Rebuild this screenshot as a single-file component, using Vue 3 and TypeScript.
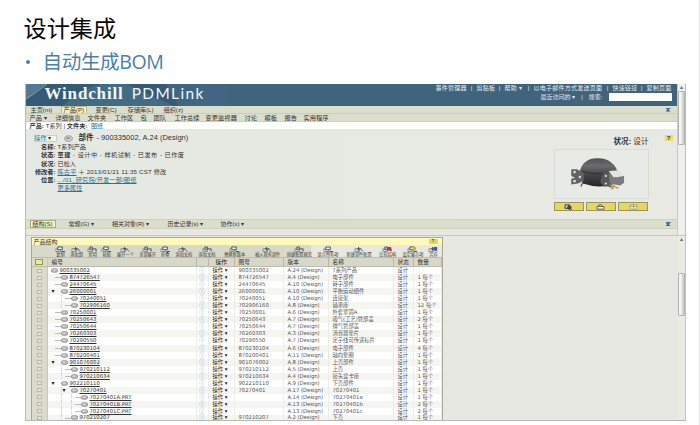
<script setup lang="ts">
interface Item { text: string; w: number; active?: boolean }
interface Row {
  no: string
  depth: number
  open?: boolean
  drawing: string
  version: string
  name: string
  state: string
  qty: string
}

const menu: Item[] = [
  { text: '主页(m)', w: 31 },
  { text: '产品(P)', w: 34, active: true },
  { text: '变更(C)', w: 32 },
  { text: '存储库(L)', w: 36 },
  { text: '组织(z)', w: 30 },
]
const subMenu: Item[] = [
  { text: '产品 ▾', w: 26 },
  { text: '详细信息', w: 32 },
  { text: '文件夹', w: 27 },
  { text: '工作区', w: 26 },
  { text: '包', w: 13 },
  { text: '团队', w: 21 },
  { text: '工作总续', w: 31 },
  { text: '变更监视器', w: 39 },
  { text: '讨论', w: 20 },
  { text: '模板', w: 20 },
  { text: '报告', w: 19 },
  { text: '实用程序', w: 40 },
]
const topLinks: Item[] = [
  { text: '事件管理器', w: 41 },
  { text: '剪贴板', w: 28 },
  { text: '帮助 ▾', w: 29 },
  { text: '以电子邮件方式发送页面', w: 79 },
  { text: '快速链接', w: 34 },
  { text: '复制页面', w: 25 },
]
const tabs: Item[] = [
  { text: '结构(S)', w: 38, active: true },
  { text: '常规(G) ▾', w: 43.5 },
  { text: '相关对象(R) ▾', w: 55.5 },
  { text: '历史记录(s) ▾', w: 53 },
  { text: '协作(x) ▾', w: 40 },
]
const tools: Item[] = [
  { text: '复制', w: 14 },
  { text: '添加到', w: 18 },
  { text: '剪切', w: 14 },
  { text: '粘贴', w: 14 },
  { text: '展开一个', w: 23 },
  { text: '全部展开', w: 21 },
  { text: '折叠', w: 14 },
  { text: '添加文档', w: 23 },
  { text: '添加文档', w: 23 },
  { text: '替换新版本', w: 32 },
  { text: '插入现有部件', w: 34 },
  { text: '创建配置规范', w: 29 },
  { text: '显示所有项', w: 28 },
  { text: '新建部件配置', w: 34 },
  { text: '比较结构', w: 23 },
  { text: '设定展示项', w: 27 },
  { text: '另存', w: 14 },
]
const d = (v: string): string => `A.${v} (Design)`
const rows: Row[] = [
  { no: '900335002', depth: 0, drawing: '900335002', version: d('24'), name: 'T系列产品', state: '设计', qty: '' },
  { no: '874726547', depth: 1, drawing: '874726547', version: d('4'), name: '电子部件', state: '设计', qty: '1 每个' },
  { no: '24470645', depth: 1, drawing: '24470645', version: d('10'), name: '转子部件', state: '设计', qty: '1 每个' },
  { no: '26000001', depth: 1, open: true, drawing: '26000001', version: d('10'), name: '平衡运动组件', state: '设计', qty: '1 每个' },
  { no: '70240051', depth: 2, drawing: '70240051', version: d('10'), name: '连接架', state: '设计', qty: '1 每个' },
  { no: '702906160', depth: 2, drawing: '702906160', version: d('8'), name: '轴承座', state: '设计', qty: '12 每个' },
  { no: '70250001', depth: 1, drawing: '70250001', version: d('6'), name: '外套紧固A', state: '设计', qty: '1 每个' },
  { no: '70250643', depth: 1, drawing: '70250643', version: d('7'), name: '吸气(工艺)管部盖', state: '设计', qty: '2 每个' },
  { no: '70250644', depth: 1, drawing: '70250644', version: d('7'), name: '排气管部盖', state: '设计', qty: '1 每个' },
  { no: '70260303', depth: 1, drawing: '70260303', version: d('3'), name: '消音器垫片', state: '设计', qty: '1 每个' },
  { no: '70290550', depth: 1, drawing: '70290550', version: d('7'), name: '定子线可传递标片', state: '设计', qty: '1 每个' },
  { no: '870230104', depth: 1, drawing: '870230104', version: d('6'), name: '电子部件', state: '设计', qty: '4 每个' },
  { no: '870200401', depth: 1, drawing: '870200401', version: d('11'), name: '轴向垫圈', state: '设计', qty: '1 每个' },
  { no: '901076002', depth: 1, open: true, drawing: '901076002', version: d('8'), name: '上壳部件', state: '设计', qty: '1 每个' },
  { no: '970210112', depth: 2, drawing: '970210112', version: d('5'), name: '上壳', state: '设计', qty: '1 每个' },
  { no: '970210634', depth: 2, drawing: '970210634', version: d('4'), name: '接头盒卡座', state: '设计', qty: '1 每个' },
  { no: '902210110', depth: 1, open: true, drawing: '902210110', version: d('9'), name: '下壳部件', state: '设计', qty: '1 每个' },
  { no: '70270401', depth: 2, open: true, drawing: '70270401', version: d('17'), name: '70270401', state: '设计', qty: '1 每个' },
  { no: '70270401A.PRT', depth: 3, drawing: '', version: d('14'), name: '70270401a', state: '设计', qty: '1 每个' },
  { no: '70270401B.PRT', depth: 3, drawing: '', version: d('13'), name: '70270401b', state: '设计', qty: '2 每个' },
  { no: '70270401C.PRT', depth: 3, drawing: '', version: d('13'), name: '70270401c', state: '设计', qty: '2 每个' },
  { no: '970210207', depth: 2, drawing: '970210207', version: d('2'), name: '下壳', state: '设计', qty: '1 每个' },
]
</script>

<template>
  <main class="slide">
    <h1>设计集成</h1>
    <h2><i class="dot"></i>自动生成BOM</h2>

    <section class="window">
      <div class="upper">
        <div class="page">
          <header class="banner">
            <svg class="art" viewBox="0 0 200 22" preserveAspectRatio="none">
              <path d="M0 0H200V22H0Z" fill="#426681" />
              <path d="M20 0H140L152 22H0V14Z" fill="#345a76" />
              <path d="M36 22Q70 -8 100 0L148 22Z" fill="#4d7690" opacity=".6" />
              <path d="M0 0H20L0 15Z" fill="#547b91" />
              <path d="M0 15Q10 9 21 0" stroke="#9fb2a8" stroke-width=".8" fill="none" />
            </svg>
            <div class="brand"><b>Windchill</b><span>PDMLink</span></div>
            <div class="global">
              <nav>
                <span v-for="(l, i) in topLinks" :key="l.text" class="link" :style="{ width: l.w + 'px' }">
                  {{ l.text }}<em v-if="i < topLinks.length - 1">|</em>
                </span>
              </nav>
              <div class="search"><span>最近访问的 ▾</span><span>|</span><span>搜索:</span><input type="text" /></div>
            </div>
          </header>
          <nav class="menu">
            <span v-for="m in menu" :key="m.text" :style="{ width: m.w + 'px' }"><b :class="{ active: m.active }">{{ m.text }}</b></span>
            <i class="collapse"></i>
          </nav>
          <nav class="submenu">
            <span v-for="m in subMenu" :key="m.text" :style="{ width: m.w + 'px' }">{{ m.text }}</span>
          </nav>
          <div class="crumb"><b>产品:</b> T系列 | <b>文件夹:</b>&nbsp; <a>图纸</a></div>

          <div class="details">
            <div class="facts">
              <div class="headline">
                <span class="action"><a>操作</a> ▾</span>
                <svg class="part" viewBox="0 0 12 9"><path d="M1 3L4 1H9L11 3V6L8 8H3L1 6Z" fill="#d2d3cf" stroke="#777" stroke-width=".8" /><path d="M3 3H8V5H3Z" fill="#85878a" /></svg>
                <b>部件</b><span>- 900335002, A.24 (Design)</span>
              </div>
              <dl>
                <dt>名称:</dt><dd>T系列产品</dd>
                <dt>状态:</dt><dd class="states"><b>草建</b> - 设计中 - 样机试制 - 已发布 - 已作废</dd>
                <dt>状况:</dt><dd>已检入</dd>
                <dt>修改者:</dt><dd class="author"><a>陈古平</a> ＋ 2013/01/21 11:35 CST 修改</dd>
                <dt>位置:</dt><dd class="path"><a>.../01_研究院/开发一部/图纸</a></dd>
                <dt></dt><dd><a>更多属性</a></dd>
              </dl>
            </div>
            <div class="preview">
              <p><b>状况:</b> 设计</p>
              <div class="thumb">
                <svg viewBox="0 0 95 50">
                  <defs>
                    <linearGradient id="shell" x1="0" y1="0" x2="0" y2="1">
                      <stop offset="0" stop-color="#505052" />
                      <stop offset=".28" stop-color="#6c6c6f" />
                      <stop offset=".55" stop-color="#48484b" />
                      <stop offset="1" stop-color="#252529" />
                    </linearGradient>
                  </defs>
                  <path d="M28 34L26 38M53 34L57 39" stroke="#555" stroke-width="1.4" />
                  <path d="M25 22C27 13 34 8 44 8.500C55 8.500 62 15 64 22L62 35Q46 41 28 35Z" fill="url(#shell)" />
                  <path d="M27 22Q44 27 60 23" stroke="#29292d" stroke-width=".8" fill="none" />
                  <path d="M16 20L22 20L29 24V32L23 35L16 36V30L20 29L16 27Z" fill="#626264" />
                  <path d="M49 24L57 23L58 38L50 38L46 33Z" fill="#58585b" />
                  <g fill="#d9d9d8"><circle cx="19.500" cy="23" r="1.400" /><circle cx="19.500" cy="32.500" r="1.400" /><circle cx="25" cy="28" r="1.300" /><circle cx="52" cy="27" r="1.200" /><circle cx="52" cy="35" r="1.200" /></g>
                  <path d="M55 22L66 21L71 27L60 29Z" fill="#e3e3df" />
                  <path d="M55 24L60 29L71 27V34L67 37L56 35Z" fill="#7b7b7d" />
                  <path d="M56 36L60 40M61 36L58 41M61 38L65 40" stroke="#b28d38" stroke-width="1.3" />
                </svg>
              </div>
              <div class="buttons">
                <button><svg viewBox="0 0 10 7"><path d="M1 1H6V5H1Z" fill="#ddd" stroke="#222" /><circle cx="6" cy="4" r="2" fill="#555" stroke="#222" /><path d="M7 5L9 7" stroke="#222" /></svg></button>
                <button><svg viewBox="0 0 10 7"><path d="M3 3V1H6L7 3" fill="#fff" stroke="#444" /><path d="M1 3H9V6H1Z" fill="#fff" stroke="#444" /></svg></button>
                <button><svg viewBox="0 0 10 7"><path d="M1 1H9V6H1ZM1 3H9M5 1V6" fill="#fffbd5" stroke="#8e874e" stroke-width=".8" /></svg></button>
              </div>
            </div>
            <i class="help">?</i>
          </div>

          <nav class="tabs">
            <span v-for="t in tabs" :key="t.text" :style="{ width: t.w + 'px' }"><b :class="{ active: t.active }">{{ t.text }}</b></span>
            <i class="collapse"></i>
          </nav>
        </div>
        <div class="scroll first"><i class="arrow">▴</i><i class="handle"></i></div>
      </div>

      <div class="lower">
        <div class="table">
          <div class="caption"><b>产品结构</b><i>?</i></div>
          <div class="toolbar">
            <span v-for="(t, i) in tools" :key="i" :style="{ width: t.w + 'px' }">
              <svg viewBox="0 0 12 7">
                <path d="M1 3H6V6H1Z" fill="#ddd" stroke="#777" stroke-width=".8" />
                <path v-if="i % 3 === 0" d="M3 1H8V4H3ZM7 6H11" fill="#f2f3e4" stroke="#344f60" />
                <path v-else-if="i % 3 === 1" d="M5 1V5M3 3H8M7 3L10 6" fill="none" stroke="#3f545c" />
                <path v-else d="M3 1H6V4H3ZM6 3H10V6" fill="#a8b4b4" stroke="#50646b" />
                <path v-if="i > 13" d="M6 1H10V5H6Z" :fill="i === 14 ? '#b83340' : i === 15 ? '#d7b51e' : '#315e9f'" />
              </svg>{{ t.text }}
            </span>
          </div>
          <div class="row head">
            <span class="check"><i></i></span><span class="number">编号</span><span class="info"></span><span class="op">操作</span>
            <span class="drawing">图号</span><span class="version">版本</span><span class="name">名称</span><span class="state">状态</span><span class="qty">数量</span>
          </div>
          <div v-for="r in rows" :key="r.no" class="row">
            <span class="check"><i></i></span>
            <span class="number">
              <i v-for="n in r.depth" :key="n" class="guide" :class="{ leaf: n === r.depth && !r.open }"><template v-if="n === r.depth && r.open">▾</template></i>
              <svg viewBox="0 0 8 5"><path d="M.5 1.5L2 .5H6L7.5 1.5V3.5L6 4.5H2L.5 3.5Z" fill="#bbb" stroke="#737373" stroke-width=".7" /><path d="M2 2H5" stroke="#f5f5f5" /></svg>
              <a>{{ r.no }}</a>
            </span>
            <span class="info">ⓘ</span><span class="op">操作 ▾</span><span class="drawing">{{ r.drawing }}</span><span class="version">{{ r.version }}</span>
            <span class="name">{{ r.name }}</span><span class="state">{{ r.state }}</span><span class="qty">{{ r.qty }}</span>
          </div>
        </div>
        <div class="scroll second"><i class="arrow">▴</i><i class="handle"></i></div>
      </div>
    </section>
  </main>
</template>

<style>
body { margin: 0; overflow: hidden; background: #fff; }
</style>
<style scoped>
* { box-sizing: border-box; }
.slide { width: 700px; height: 425px; padding: 13px 0 0 24.5px; border-right: 1px solid #e9e9e9; overflow: hidden; background: #fff; color: #333; font-family: "Liberation Sans", "Noto Sans CJK SC", sans-serif; white-space: nowrap; }
h1, h2, p, dl, dd { margin: 0; font-weight: 400; }
i, em { font-style: normal; }
h1 { height: 33px; margin-left: -1px; font: 23.2px/29px "Noto Sans CJK SC", sans-serif; color: #080808; }
h2 { display: flex; align-items: center; height: 38px; padding-bottom: 6px; font: 19.6px/32px "Open Sans", "Noto Sans CJK SC", sans-serif; letter-spacing: -.4px; color: #4c7fae; }
.dot { width: 4px; height: 4px; margin: 0 13px 0 1px; border-radius: 50%; background: #4c7fae; }
.window { display: flex; flex-direction: column; width: 661px; height: 337px; border-left: 1px solid #b9bdb8; border-bottom: 1px solid #b7b9b3; overflow: hidden; background: #e7e8e1; }
.upper { display: flex; height: 152px; border-right: 1px solid #bbb; border-bottom: 1px solid #c5c6c0; }
.page { width: 651px; }
.banner { position: relative; display: flex; justify-content: space-between; height: 22px; background: #41647d; color: #e1edf1; }
.art { position: absolute; left: 0; top: 0; width: 200px; height: 22px; }
.brand { position: relative; display: flex; align-items: center; gap: 8px; padding: 0 0 3px 19px; color: #f3f6f7; }
.brand b { font: 700 17px/19px "Liberation Serif", serif; letter-spacing: .85px; }
.brand span { font: 400 15.4px/19px Lato, sans-serif; letter-spacing: 1.4px; }
.global { width: 241px; padding-top: 1px; font-size: 6px; }
.global nav { display: flex; height: 7px; line-height: 7px; }
.link { display: flex; letter-spacing: .25px; }
.link em { margin-left: auto; margin-right: 4px; }
.search { display: flex; align-items: center; justify-content: flex-end; gap: 6px; height: 10px; padding-right: 5px; line-height: 8px; }
.search input { width: 63px; height: 8px; padding: 0; border: 0; background: #fff; }
.menu, .submenu, .tabs { display: flex; align-items: center; font-size: 6.2px; }
.menu { height: 7px; padding-left: 5px; background: #dcdecd; line-height: 7px; }
.menu b, .tabs b { font-weight: 400; }
.menu .active { display: inline-block; height: 7px; margin-left: -1px; padding: 0 2px; border: 1px solid #bcb887; border-bottom: 0; background: #f6f1c1; line-height: 6px; vertical-align: top; }
.collapse { width: 5px; height: 4px; margin-left: auto; margin-right: 6px; border-top: 1px solid #4d7285; background: #345e7a; clip-path: polygon(0 0, 100% 0, 100% 25%, 60% 50%, 100% 100%, 0 100%, 40% 50%, 0 25%); }
.submenu { height: 9px; padding-left: 4px; border-top: 1px solid #cccdb8; border-bottom: 1px solid #cdcebf; background: #dcdecd; line-height: 7px; letter-spacing: .1px; }
.crumb { height: 7px; padding-left: 4px; background: #fffffb; font-size: 6.2px; line-height: 7px; }
a { color: #277295; text-decoration: underline; }
.details { position: relative; display: flex; justify-content: space-between; height: 90px; padding: 4px 28px 0 8px; background: linear-gradient(90deg, #e5e9e3, #e8e9e2); }
.headline { display: flex; align-items: center; height: 10px; font-size: 7.5px; line-height: 10px; }
.headline b { margin-right: 3px; }
.action { width: 23px; height: 7px; border: 1px solid #c8d1cb; background: #f1f4e8; font-size: 6px; line-height: 5px; }
.action a { text-decoration: none; }
.part { width: 9px; height: 7px; margin: 0 6px 0 7px; }
dl { display: grid; grid-template-columns: 22px 1fr; column-gap: 2px; grid-auto-rows: 8.3px; font-size: 6.2px; line-height: 8px; }
dt { display: flex; justify-content: flex-end; font-weight: 700; }
dd b { font-weight: 700; }
.states { letter-spacing: .45px; }
.author { letter-spacing: .17px; }
.path { letter-spacing: .15px; }
.preview { width: 95px; }
.preview p { height: 16px; text-align: right; font-size: 7.6px; line-height: 18px; }
.thumb { height: 50px; border: 1px solid #d9dcd5; background: #e8eae5; }
.thumb svg { display: block; width: 93px; height: 48px; }
.buttons { display: flex; gap: 2px; margin-top: 3px; }
.buttons button { display: flex; align-items: center; justify-content: center; flex: 1; height: 9px; padding: 0; border: 1px solid #99955f; background: #e8d664; }
.buttons svg { width: 9px; height: 6px; }
.help { position: absolute; right: 4px; top: 6px; width: 8px; height: 6px; background: #e7db68; font-size: 6px; font-weight: 700; line-height: 6px; text-align: center; }
.tabs { height: 10px; padding-left: 5px; border: solid #cfd0bf; border-width: 1px 0; background: #dcdecd; font-size: 6px; line-height: 8px; }
.tabs .active { display: inline-block; padding: 0 2px; margin-left: -1px; border: 1px solid #aeb079; background: #f2f1bf; line-height: 6px; }
.scroll { display: flex; flex-direction: column; align-items: center; width: 8px; background: #efefee; }
.first { border-left: 1px solid #c9c9c7; }
.arrow { height: 7px; font-size: 6px; line-height: 7px; color: #666; }
.handle { width: 7px; border: 1px solid #b3b3b0; border-radius: 1px; background: linear-gradient(90deg, #f5f5f5 30%, #c5c5c3); }
.first .handle { height: 54px; }
.lower { display: flex; justify-content: space-between; height: 184px; padding-left: 5px; border-right: 1px solid #c2c3bf; overflow: hidden; }
.second { width: 7px; background: #ebebe6; }
.second .handle { height: 43px; margin-top: 30px; }
.table { width: 412px; height: 200px; margin-top: 1px; border: 1px solid #a6a997; background: #fff; }
.caption { display: flex; align-items: center; justify-content: space-between; height: 7px; padding: 0 4px 0 2px; background: #fffab9; font-size: 6px; line-height: 6px; }
.caption i { width: 9px; height: 5px; background: #e5d663; font-size: 5px; line-height: 5px; text-align: center; }
.caption b { font-weight: 400; }
.toolbar { display: flex; justify-content: space-between; height: 12px; padding: 1px 1px 0 22px; background: linear-gradient(90deg, #d8d9c8 68%, #e8e8df 68%); font-size: 4.2px; line-height: 4px; }
.toolbar span { display: flex; flex-direction: column; align-items: center; }
.toolbar svg { width: 11px; height: 6.5px; }
.row { display: flex; height: 7.05px; background: #fff; font: 5.3px/7px "DejaVu Sans", "Noto Sans CJK SC", sans-serif; color: #555; }
.row:nth-child(odd) { background: #f5f5f2; }
.row > span { flex-shrink: 0; height: 100%; border-right: 1px solid #ecece8; }
.row .check { display: flex; align-items: center; justify-content: center; width: 16px; background: #dadbca; border-right-color: #c6c7b8; }
.check i { width: 5px; height: 4px; border: 1px solid #b8baa9; background: #e7e8dc; }
.row .number { display: flex; align-items: center; width: 149px; padding-left: 3px; }
.number svg { width: 7px; height: 5px; margin-right: 2px; }
.number a { color: #333; text-decoration-thickness: .5px; }
.guide { width: 10px; height: 100%; color: #222; font-size: 6px; line-height: 6px; padding-left: 1px; }
.guide + .guide { border-left: 1px dotted #ccc; }
.leaf { background: linear-gradient(#bbb, #bbb) right 3px / 6px 1px no-repeat; }
.row .info { width: 12px; text-align: center; color: #888; }
.row .op { width: 26px; padding-left: 4px; color: #222; }
.row .drawing { width: 49px; padding-left: 4px; }
.row .version { width: 45px; padding-left: 4px; letter-spacing: -.05px; }
.row .name { width: 65px; padding-left: 4px; }
.row .state { width: 20px; padding-left: 4px; }
.row .qty { width: 28px; padding-left: 4px; }
.row:last-child { height: 6px; line-height: 5px; }
.row:last-child .guide { line-height: 5px; }
.row.head { height: 10px; background: #d7d8c9; font-size: 5.7px; line-height: 9px; color: #333; border: solid #bdbea9; border-width: 1px 0; }
.head > span { border-right-color: #b6b7a9; }
.head .number { padding-left: 4px; }
.head .op { padding-left: 7px; }
.head .check i { width: 8px; height: 6px; border-color: #969a4d; background: #ebe8a0; }
</style>
